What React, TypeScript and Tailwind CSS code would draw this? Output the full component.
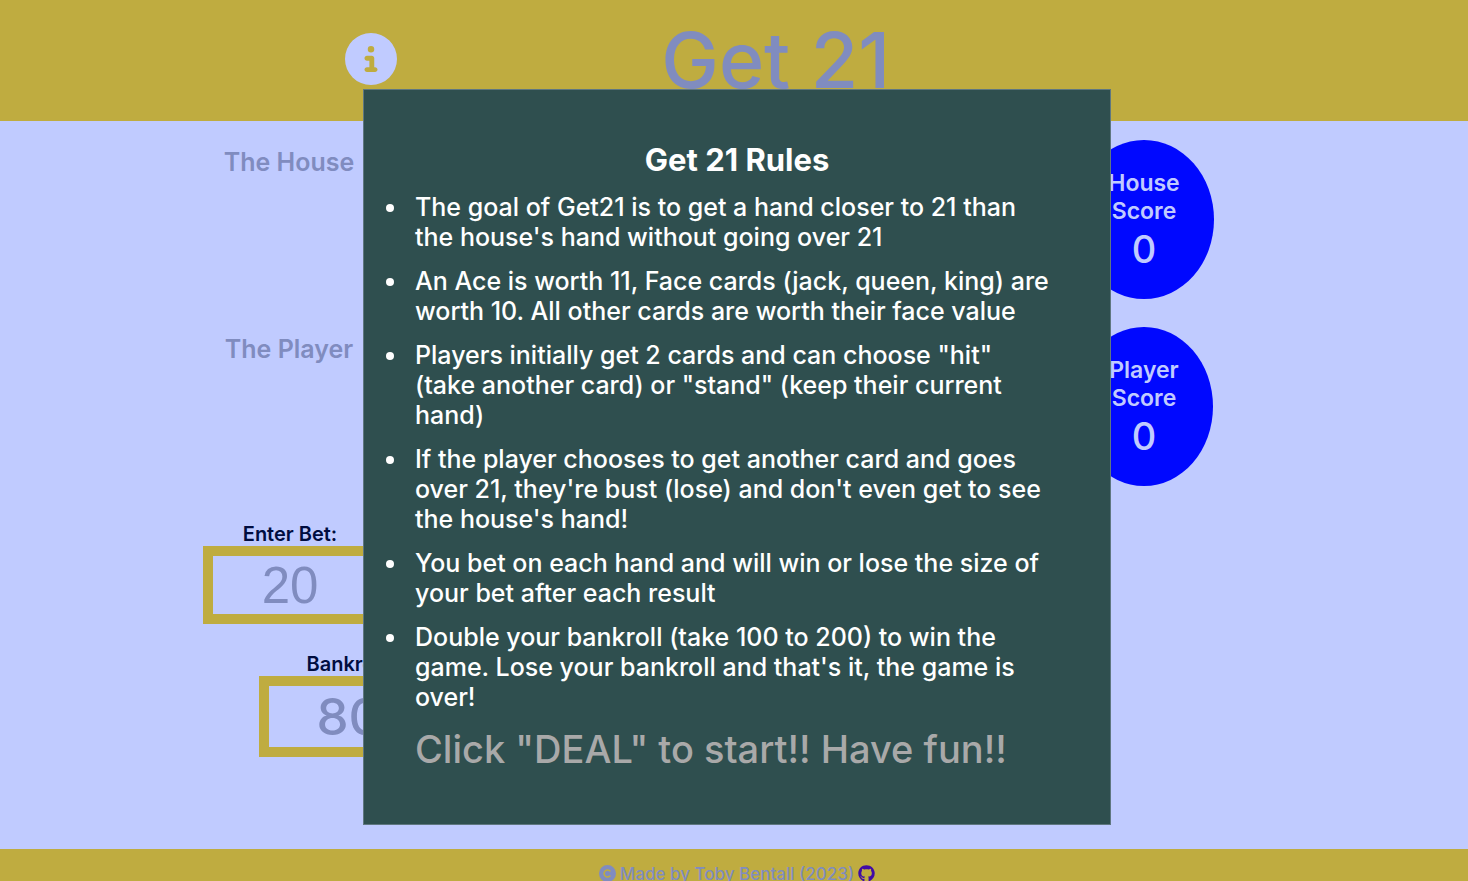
import { useState } from "react";
import { FaCircleInfo, FaCopyright, FaGithub } from "react-icons/fa6";

const rules = [
  "The goal of Get21 is to get a hand closer to 21 than the house's hand without going over 21",
  "An Ace is worth 11, Face cards (jack, queen, king) are worth 10. All other cards are worth their face value",
  'Players initially get 2 cards and can choose "hit" (take another card) or "stand" (keep their current hand)',
  "If the player chooses to get another card and goes over 21, they're bust (lose) and don't even get to see the house's hand!",
  "You bet on each hand and will win or lose the size of your bet after each result",
  "Double your bankroll (take 100 to 200) to win the game. Lose your bankroll and that's it, the game is over!",
];

function Hand({ name, score }: { name: string; score: number }) {
  return (
    <section className="flex h-[187px] items-start justify-between">
      <h2 className="w-[180px] pt-1.5 text-center text-[25px] leading-8 font-semibold">The {name}</h2>
      <div className="flex w-[140px] justify-center">
        <div className="flex h-[159px] flex-col items-center rounded-[50%] bg-[#0008ff] px-[34px] pt-[29px] text-center text-[#c0cbff]">
          <h3 className="text-[23px] leading-7 font-semibold">
            {name}
            <br />
            Score
          </h3>
          <p className="text-[38px] leading-[48px]">{score}</p>
        </div>
      </div>
    </section>
  );
}

function Rules() {
  return (
    <div
      role="dialog"
      aria-labelledby="rules-title"
      className="absolute top-[89px] left-1/2 ml-[3px] w-[748px] -translate-x-1/2 border border-[#5f7780] bg-[#2f4f4f] px-[51px] py-[50px] text-white"
    >
      <h2 id="rules-title" className="mb-3 text-center text-[31px] leading-10 font-bold">
        Get 21 Rules
      </h2>
      <ul className="mr-1.5 -ml-1.5 list-disc space-y-[14px] text-[25px] leading-[30px]">
        {rules.map((rule) => (
          <li key={rule} className="pl-1.5">
            {rule}
          </li>
        ))}
      </ul>
      <p className="mt-3 text-[38px] leading-[50px] text-[#a9a9a9]">Click "DEAL" to start!! Have fun!!</p>
    </div>
  );
}

export default function App() {
  const [open, setOpen] = useState(true);
  const [bet, setBet] = useState("20");
  return (
    <div className="relative flex h-screen flex-col overflow-hidden bg-[#c0cbff] font-['Inter','Liberation_Sans',sans-serif] font-medium text-[#808cbf]">
      <header className="grid h-[121px] shrink-0 grid-cols-[50.5%_1fr] bg-[#bfac40]">
        <button
          type="button"
          aria-label="Rules"
          onClick={() => setOpen(!open)}
          className="mt-[33px] h-[52px] justify-self-center text-[52px] text-[#c0cbff]"
        >
          <FaCircleInfo />
        </button>
        <h1 className="-ml-20 pt-3.5 text-[77px] leading-[92px]">Get 21</h1>
      </header>

      <main className="flex-1 pt-[19px] pr-[254px] pl-[199px]">
        <Hand name="House" score={0} />
        <Hand name="Player" score={0} />
        <div className="ml-1 flex w-[174px] flex-col items-center pt-2">
          <label htmlFor="bet" className="text-xl leading-6 font-semibold text-[#000d40]">
            Enter Bet:
          </label>
          <input
            id="bet"
            value={bet}
            onChange={(e) => setBet(e.target.value)}
            className="h-[78px] w-full border-10 border-[#bfac40] text-center font-['Liberation_Sans',Arial,sans-serif] text-[51px] font-normal"
          />
        </div>
        <div className="mt-7 ml-[60px] flex w-[180px] flex-col items-center">
          <h3 className="text-xl leading-6 font-semibold text-[#000d40]">Bankroll:</h3>
          <p className="w-full border-10 border-[#bfac40] text-center text-[51px] leading-[61px]">80</p>
        </div>
      </main>

      <footer className="flex h-8 shrink-0 items-start justify-center gap-1 bg-[#bfac40] pt-4 pl-1.5 text-[17px] leading-[18px]">
        <FaCopyright />
        <p>Made by Toby Bentall (2023)</p>
        <a href="https://github.com" aria-label="GitHub" className="text-[#400ba6]">
          <FaGithub />
        </a>
      </footer>

      {open && <Rules />}
    </div>
  );
}
